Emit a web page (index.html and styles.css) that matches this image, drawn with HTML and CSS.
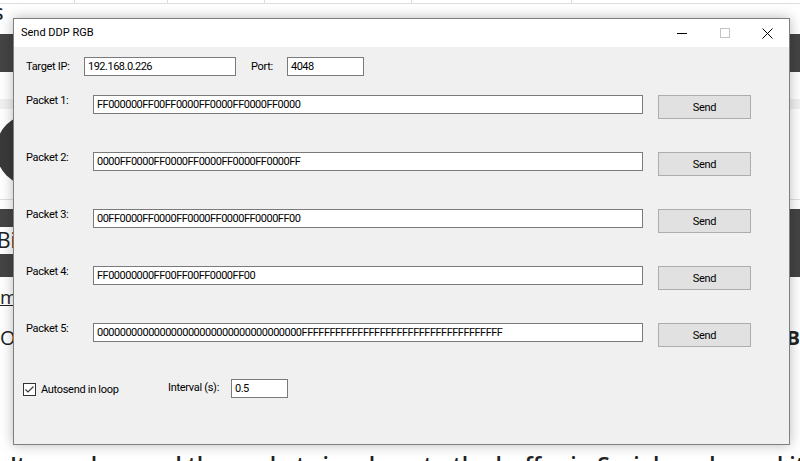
FILE: index.html
```html
<!DOCTYPE html>
<html>
<head>
    <title>Send DDP RGB</title>
    <meta charset="UTF-8">
    <link rel="stylesheet" href="styles.css">
</head>
<body>
    <div class="page">
        <div class="page-tabs">
            <div class="page-tab"></div>
            <div class="page-tab"></div>
            <div class="page-tab"></div>
            <div class="page-tab"></div>
            <div class="page-tab"></div>
            <div></div>
        </div>
        <div class="page-head">S</div>
        <div class="page-nav"></div>
        <div class="page-band"></div>
        <div class="page-profile">
            <div class="avatar"></div>
        </div>
        <div class="page-bar"></div>
        <div class="page-strip">
            <span class="strip-title">Bi</span>
            <span class="strip-edge"></span>
        </div>
        <div class="page-bar tall"></div>
        <div class="page-link"><a>manual</a></div>
        <div class="page-row">
            <span>Or</span>
            <span class="row-end">B</span>
        </div>
        <div class="page-text">It can also send the packets in a loop to the buffer in Serial mode, and it will then</div>
    </div>

    <div class="dialog">
        <div class="title-bar">
            <span class="title">Send DDP RGB</span>
            <div class="win-controls">
                <div class="win-btn">
                    <svg width="10" height="10" viewBox="0 0 10 10"><line x1="0" y1="5.5" x2="10" y2="5.5" stroke="#000" stroke-width="1"/></svg>
                </div>
                <div class="win-btn">
                    <svg width="10" height="10" viewBox="0 0 10 10"><rect x="0.5" y="0.5" width="9" height="9" fill="none" stroke="#c4c4c4" stroke-width="1"/></svg>
                </div>
                <div class="win-btn">
                    <svg width="11" height="11" viewBox="0 0 11 11"><path d="M0.5 0.5 L10.5 10.5 M10.5 0.5 L0.5 10.5" stroke="#000" stroke-width="1"/></svg>
                </div>
            </div>
        </div>

        <div class="dialog-body">
            <div class="target-row">
                <label class="lbl lbl-ip">Target IP:</label>
                <input class="textbox ip-box" type="text" value="192.168.0.226">
                <label class="lbl lbl-port">Port:</label>
                <input class="textbox port-box" type="text" value="4048">
            </div>

            <div class="packet-row">
                <label class="lbl lbl-packet">Packet 1:</label>
                <input class="textbox packet-box" type="text" value="FF000000FF00FF0000FF0000FF0000FF0000">
                <button class="send-btn">Send</button>
            </div>
            <div class="packet-row">
                <label class="lbl lbl-packet">Packet 2:</label>
                <input class="textbox packet-box" type="text" value="0000FF0000FF0000FF0000FF0000FF0000FF">
                <button class="send-btn">Send</button>
            </div>
            <div class="packet-row">
                <label class="lbl lbl-packet">Packet 3:</label>
                <input class="textbox packet-box" type="text" value="00FF0000FF0000FF0000FF0000FF0000FF00">
                <button class="send-btn">Send</button>
            </div>
            <div class="packet-row">
                <label class="lbl lbl-packet">Packet 4:</label>
                <input class="textbox packet-box" type="text" value="FF00000000FF00FF00FF0000FF00">
                <button class="send-btn">Send</button>
            </div>
            <div class="packet-row">
                <label class="lbl lbl-packet">Packet 5:</label>
                <input class="textbox packet-box" type="text" value="000000000000000000000000000000000000FFFFFFFFFFFFFFFFFFFFFFFFFFFFFFFFFFFF">
                <button class="send-btn">Send</button>
            </div>

            <div class="loop-row">
                <label class="autosend">
                    <span class="check-box">
                        <svg width="11" height="11" viewBox="0 0 11 11"><polyline points="1.5,5.5 4,8 9.5,2.5" fill="none" stroke="#333" stroke-width="1.1"/></svg>
                    </span>
                    Autosend in loop
                </label>
                <label class="lbl lbl-interval">Interval (s):</label>
                <input class="textbox interval-box" type="text" value="0.5">
            </div>
        </div>
    </div>
</body>
</html>
```

FILE: styles.css
```css
:root {
    --form-bg: #f0f0f0;
    --box-border: #7a7a7a;
    --btn-bg: #e1e1e1;
    --btn-border: #adadad;
    --page-dark: #444;
    --page-line: #dedede;
}

* {
    margin: 0;
    padding: 0;
    box-sizing: border-box;
}

body {
    width: 800px;
    height: 461px;
    overflow: hidden;
    position: relative;
    background: #fff;
}

/* page behind the window */

.page {
    font-family: 'Open Sans', sans-serif;
    color: #222;
}

.page-tabs {
    display: grid;
    grid-template-columns: 75px 93px 97px 147px 160px 1fr;
    height: 4px;
    border-bottom: 1px solid var(--page-line);
}

.page-tab {
    border-right: 1px solid var(--page-line);
}

.page-head {
    height: 30px;
    font-size: 17px;
    font-weight: 600;
    line-height: 20px;
    margin-left: -6px;
}

.page-nav {
    height: 38px;
    background: var(--page-dark);
    margin-bottom: 27px;
}

.page-band {
    height: 10px;
    background: #f1f1f1;
}

.page-profile {
    height: 91px;
    padding-top: 5px;
    border-bottom: 1px solid var(--page-line);
    margin-bottom: 9px;
}

.avatar {
    width: 72px;
    height: 72px;
    border-radius: 50%;
    background: #3a3a3a;
    margin-left: -4px;
}

.page-bar {
    height: 18px;
    background: var(--page-dark);
}

.page-bar.tall {
    height: 23px;
}

.page-strip {
    height: 27px;
    display: flex;
    align-items: center;
}

.strip-title {
    font-size: 21px;
    line-height: 27px;
    margin-left: -3px;
}

.strip-edge {
    margin-left: auto;
    width: 12px;
    height: 100%;
    background: var(--page-dark);
}

.page-link {
    height: 42px;
    padding-top: 8px;
    font-size: 19px;
    line-height: 24px;
}

.page-link a {
    color: #222;
    text-decoration: underline;
}

.page-row {
    height: 126px;
    display: flex;
    justify-content: space-between;
    font-size: 20px;
    line-height: 26px;
    padding-top: 6px;
}

.row-end {
    font-weight: 700;
}

.page-text {
    font-size: 23px;
    font-weight: 600;
    line-height: 30px;
    padding-top: 5px;
    padding-left: 10px;
    white-space: nowrap;
}

/* dialog window */

.dialog {
    position: absolute;
    left: 13px;
    top: 18px;
    width: 777px;
    height: 427px;
    border: 1px solid #7f7f7f;
    background: var(--form-bg);
    box-shadow: 0 0 12px rgba(0, 0, 0, 0.28);
    font-family: Roboto, 'Liberation Sans', sans-serif;
    font-size: 11px;
    color: #000;
}

.title-bar {
    height: 28px;
    background: #fff;
    display: flex;
    align-items: center;
    padding-left: 7px;
}

.title {
    font-size: 11px;
    line-height: 14px;
}

.win-controls {
    margin-left: auto;
    display: flex;
    height: 100%;
}

.win-btn {
    width: 43px;
    height: 100%;
    display: flex;
    align-items: center;
    justify-content: center;
}

.dialog-body {
    padding: 10px 12px 0 12px;
    letter-spacing: -0.3px;
}

.lbl {
    line-height: 13px;
    white-space: nowrap;
}

.textbox {
    height: 19px;
    border: 1px solid var(--box-border);
    background: #fff;
    padding: 0 3px;
    font-family: Roboto, 'Liberation Sans', sans-serif;
    font-size: 11px;
    letter-spacing: -0.5px;
    color: #000;
    outline: none;
}

.target-row {
    display: flex;
    align-items: center;
    height: 19px;
}

.lbl-ip {
    width: 58px;
}

.ip-box {
    width: 152px;
}

.lbl-port {
    width: 36px;
    margin-left: 15px;
}

.port-box {
    width: 77px;
}

.packet-row {
    display: flex;
    align-items: flex-start;
    height: 24px;
    margin-top: 33px;
}

.target-row + .packet-row {
    margin-top: 19px;
}

.lbl-packet {
    width: 67px;
    margin-top: -1px;
}

.packet-box {
    width: 550px;
}

.send-btn {
    width: 93px;
    height: 24px;
    margin-left: 15px;
    background: var(--btn-bg);
    border: 1px solid var(--btn-border);
    font-family: Roboto, 'Liberation Sans', sans-serif;
    font-size: 11px;
    letter-spacing: -0.3px;
    color: #000;
}

.loop-row {
    display: flex;
    align-items: flex-start;
    height: 19px;
    margin-top: 32px;
}

.autosend {
    display: flex;
    align-items: center;
    gap: 5px;
    width: 145px;
    height: 13px;
    line-height: 13px;
    margin-left: -3px;
    margin-top: 4px;
    white-space: nowrap;
}

.check-box {
    width: 13px;
    height: 13px;
    border: 1px solid #333;
    background: #fff;
    display: flex;
    align-items: center;
    justify-content: center;
}

.lbl-interval {
    width: 63px;
    margin-top: 2px;
}

.interval-box {
    width: 57px;
}
```
